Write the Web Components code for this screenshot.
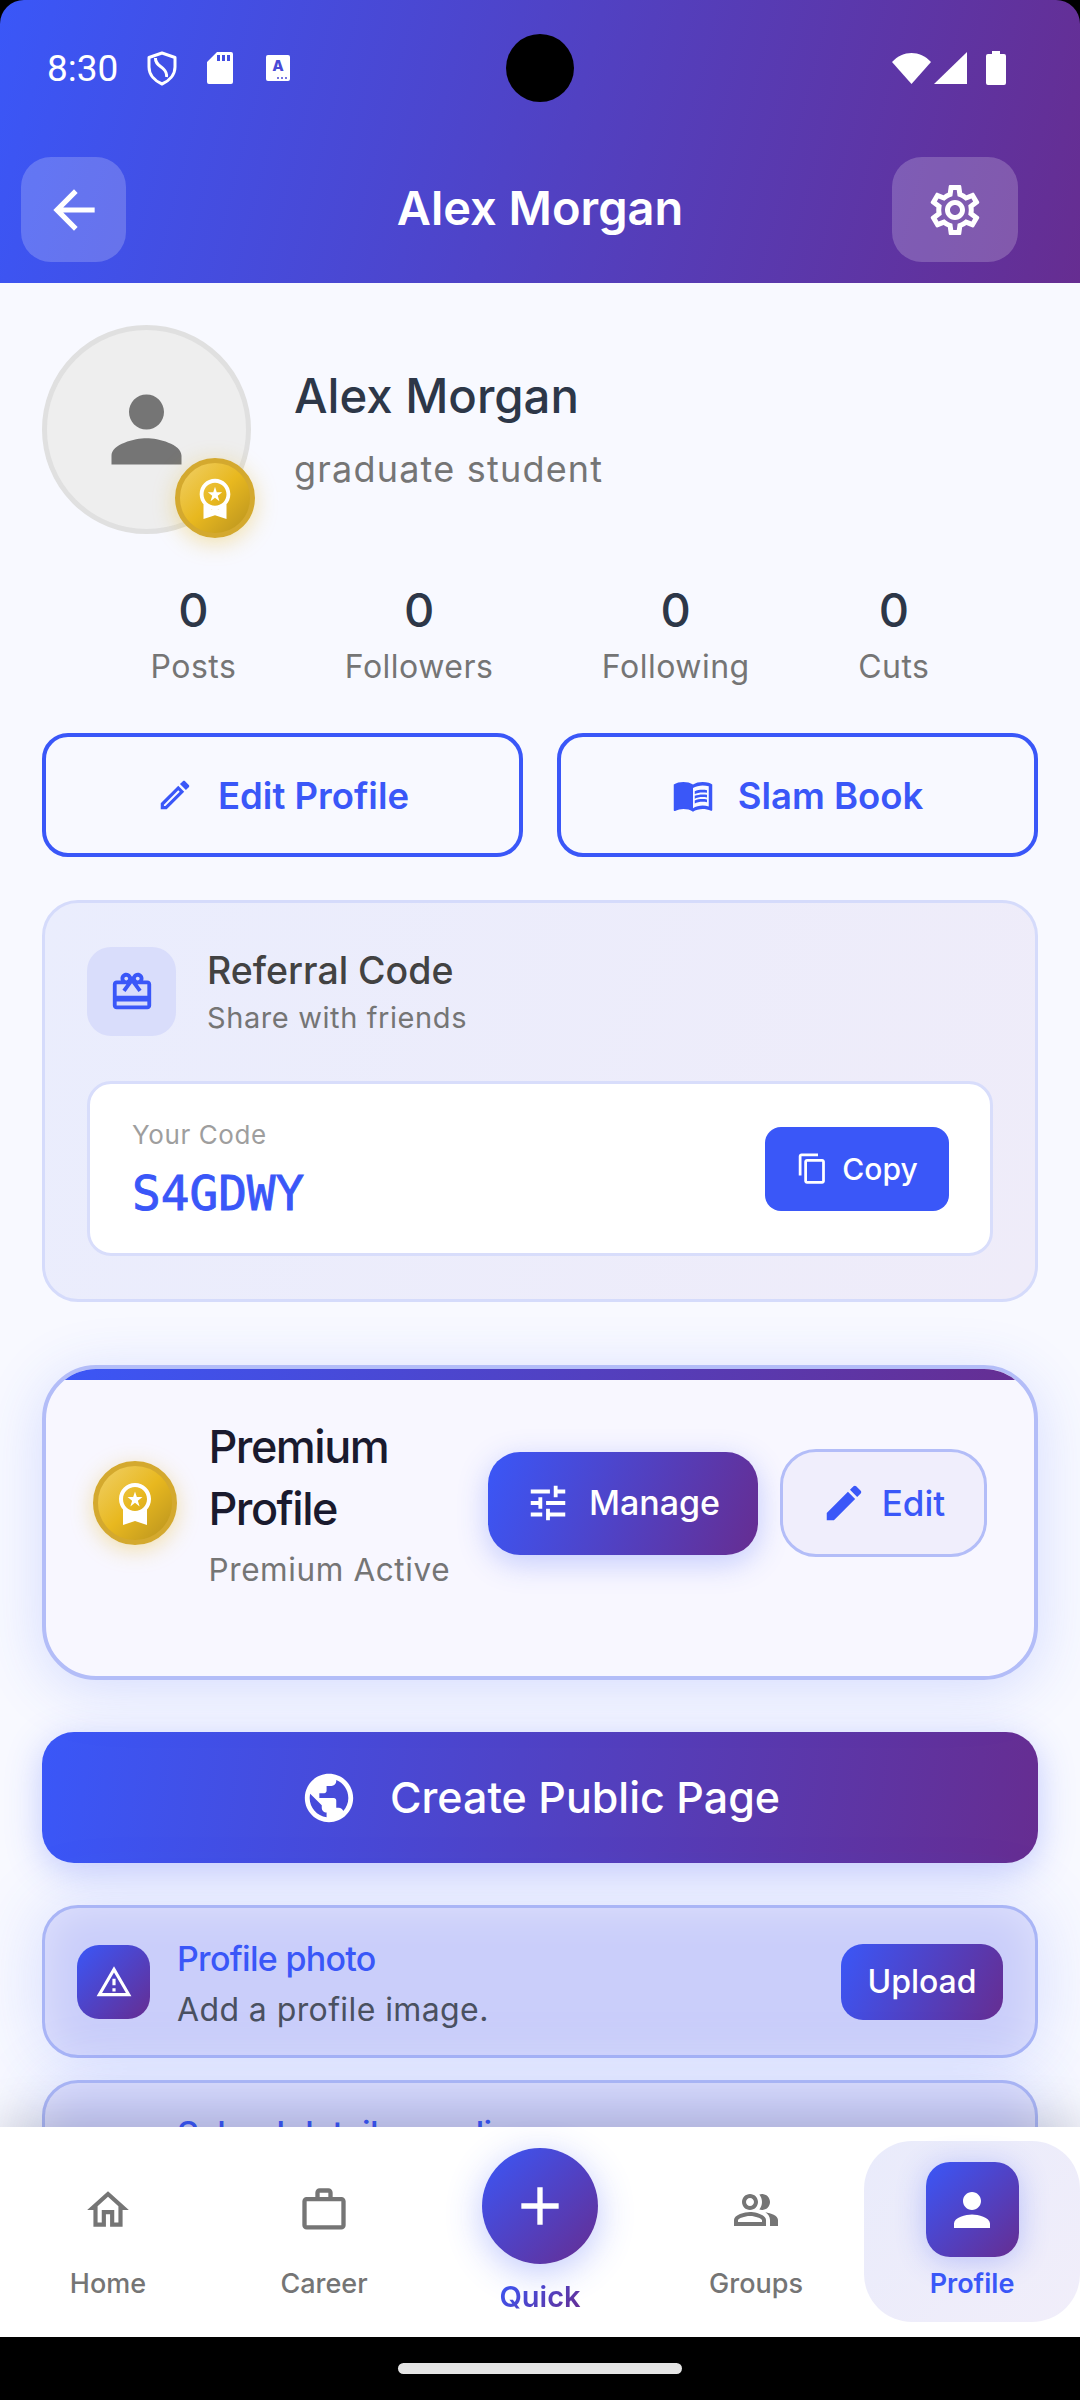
<!DOCTYPE html>
<html lang="en">
<head>
<meta charset="utf-8">
<title>Alex Morgan</title>
<style>
  html,body{margin:0;padding:0;background:#000;}
  body{width:1080px;height:2400px;font-family:Inter,"Noto Sans",sans-serif;overflow:hidden;}
</style>
</head>
<body>
<profile-app>
  <app-header slot="header" title-text="Alex Morgan"></app-header>

  <profile-summary name="Alex Morgan" role="graduate student"></profile-summary>

  <stat-row>
    <stat-item value="0">Posts</stat-item>
    <stat-item value="0">Followers</stat-item>
    <stat-item value="0">Following</stat-item>
    <stat-item value="0">Cuts</stat-item>
  </stat-row>

  <action-row>
    <outline-button icon="edit-o" size="38">Edit Profile</outline-button>
    <outline-button icon="book" size="42">Slam Book</outline-button>
  </action-row>

  <referral-card code="S4GDWY"></referral-card>
  <premium-card></premium-card>
  <cta-button>Create Public Page</cta-button>

  <alert-card style="margin-top:42px" heading="Profile photo" action="Upload">Add a profile image.</alert-card>
  <alert-card style="margin-top:22px" heading="School details pending" action="Add">Add your school details to connect with your classmates.</alert-card>

  <bottom-nav slot="nav">
    <nav-item icon="home" size="50">Home</nav-item>
    <nav-item icon="work" size="52">Career</nav-item>
    <nav-item icon="add" size="64" kind="quick">Quick</nav-item>
    <nav-item icon="group" size="48">Groups</nav-item>
    <nav-item icon="person" size="54" kind="active">Profile</nav-item>
  </bottom-nav>
</profile-app>

<script>
const BLUE = '#3a57f8', PURPLE = '#662d91';
const ICONS = {
  back:'M20 11H7.83l5.59-5.59L12 4l-8 8 8 8 1.41-1.41L7.83 13H20v-2z',
  settings:'M19.43 12.98c.04-.32.07-.64.07-.98 0-.34-.03-.66-.07-.98l2.11-1.65c.19-.15.24-.42.12-.64l-2-3.46c-.09-.16-.26-.25-.44-.25-.06 0-.12.01-.17.03l-2.49 1c-.52-.4-1.08-.73-1.69-.98l-.38-2.65C14.46 2.18 14.25 2 14 2h-4c-.25 0-.46.18-.49.42l-.38 2.65c-.61.25-1.17.59-1.69.98l-2.49-1c-.06-.02-.12-.03-.18-.03-.17 0-.34.09-.43.25l-2 3.46c-.13.22-.07.49.12.64l2.11 1.65c-.04.32-.07.65-.07.98 0 .33.03.66.07.98l-2.11 1.65c-.19.15-.24.42-.12.64l2 3.46c.09.16.26.25.44.25.06 0 .12-.01.17-.03l2.49-1c.52.4 1.08.73 1.69.98l.38 2.65c.03.24.24.42.49.42h4c.25 0 .46-.18.49-.42l.38-2.65c.61-.25 1.17-.59 1.69-.98l2.49 1c.06.02.12.03.18.03.17 0 .34-.09.43-.25l2-3.46c.12-.22.07-.49-.12-.64l-2.11-1.65zm-1.98-1.71c.04.31.05.52.05.73 0 .21-.02.43-.05.73l-.14 1.13.89.7 1.08.84-.7 1.21-1.27-.51-1.04-.42-.9.68c-.43.32-.84.56-1.25.73l-1.06.43-.16 1.13-.2 1.35h-1.4l-.19-1.35-.16-1.13-1.06-.43c-.43-.18-.83-.41-1.23-.71l-.91-.7-1.06.43-1.27.51-.7-1.21 1.08-.84.89-.7-.14-1.13c-.03-.31-.05-.54-.05-.74s.02-.43.05-.73l.14-1.13-.89-.7-1.08-.84.7-1.21 1.27.51 1.04.42.9-.68c.43-.32.84-.56 1.25-.73l1.06-.43.16-1.13.2-1.35h1.39l.19 1.35.16 1.13 1.06.43c.43.18.83.41 1.23.71l.91.7 1.06-.43 1.27-.51.7 1.21-1.07.85-.89.7.14 1.13zM12 8c-2.21 0-4 1.79-4 4s1.79 4 4 4 4-1.79 4-4-1.79-4-4-4zm0 6c-1.1 0-2-.9-2-2s.9-2 2-2 2 .9 2 2-.9 2-2 2z',
  person:'M12 12c2.21 0 4-1.79 4-4s-1.79-4-4-4-4 1.79-4 4 1.79 4 4 4zm0 2c-2.67 0-8 1.34-8 4v2h16v-2c0-2.66-5.33-4-8-4z',
  premium:'M9.68 13.69L12 11.93l2.31 1.76-.88-2.85L15.75 9h-2.84L12 6.19 11.09 9H8.25l2.31 1.84-.88 2.85zM20 10c0-4.42-3.58-8-8-8s-8 3.58-8 8 3.58 8 8 8 8-3.58 8-8zm-8 6c-3.31 0-6-2.69-6-6s2.69-6 6-6 6 2.69 6 6-2.69 6-6 6zM6 15.3V23l6-2 6 2v-7.7A8 8 0 0 1 12 18a8 8 0 0 1-6-2.7z',
  'edit-o':'M14.06 9.02l.92.92L5.92 19H5v-.92l9.06-9.06M17.66 3c-.25 0-.51.1-.7.29l-1.83 1.83 3.75 3.75 1.83-1.83c.39-.39.39-1.02 0-1.41l-2.34-2.34c-.2-.2-.45-.29-.71-.29zm-3.6 3.19L3 17.25V21h3.75L17.81 9.94l-3.75-3.75z',
  edit:'M3 17.25V21h3.75L17.81 9.94l-3.75-3.75L3 17.25zM20.71 7.04c.39-.39.39-1.02 0-1.41l-2.34-2.34c-.39-.39-1.02-.39-1.41 0l-1.83 1.83 3.75 3.75 1.83-1.83z',
  book:'M21 5c-1.11-.35-2.33-.5-3.5-.5-1.95 0-4.05.4-5.5 1.5-1.45-1.1-3.55-1.5-5.5-1.5S2.45 4.9 1 6v14.65c0 .25.25.5.5.5.1 0 .15-.05.25-.05C3.1 20.45 5.05 20 6.5 20c1.95 0 4.05.4 5.5 1.5 1.35-.85 3.8-1.5 5.5-1.5 1.65 0 3.35.3 4.75 1.05.1.05.15.05.25.05.25 0 .5-.25.5-.5V6c-.6-.45-1.25-.75-2-1zm0 13.5c-1.1-.35-2.3-.5-3.5-.5-1.7 0-4.15.65-5.5 1.5V8c1.35-.85 3.8-1.5 5.5-1.5 1.2 0 2.4.15 3.5.5v11.5zM17.5 10.5c.88 0 1.73.09 2.5.26V9.24c-.79-.15-1.64-.24-2.5-.24-1.7 0-3.24.29-4.5.83v1.66c1.13-.64 2.7-.99 4.5-.99zM13 12.49v1.66c1.13-.64 2.7-.99 4.5-.99.88 0 1.73.09 2.5.26V11.9c-.79-.15-1.64-.24-2.5-.24-1.7 0-3.24.3-4.5.83zM17.5 14.33c-1.7 0-3.24.29-4.5.83v1.66c1.13-.64 2.7-.99 4.5-.99.88 0 1.73.09 2.5.26v-1.52c-.79-.16-1.64-.24-2.5-.24z',
  gift:'M20 6h-2.18c.11-.31.18-.65.18-1 0-1.66-1.34-3-3-3-1.05 0-1.96.54-2.5 1.35l-.5.67-.5-.68C10.96 2.54 10.05 2 9 2 7.34 2 6 3.34 6 5c0 .35.07.69.18 1H4c-1.11 0-1.99.89-1.99 2L2 19c0 1.11.89 2 2 2h16c1.11 0 2-.89 2-2V8c0-1.11-.89-2-2-2zm-5-2c.55 0 1 .45 1 1s-.45 1-1 1-1-.45-1-1 .45-1 1-1zM9 4c.55 0 1 .45 1 1s-.45 1-1 1-1-.45-1-1 .45-1 1-1zm11 15H4v-2h16v2zm0-5H4V8h5.08L7 10.83 8.62 12 11 8.76l1-1.36 1 1.36L15.38 12 17 10.83 14.92 8H20v6z',
  copy:'M16 1H4c-1.1 0-2 .9-2 2v14h2V3h12V1zm3 4H8c-1.1 0-2 .9-2 2v14c0 1.1.9 2 2 2h11c1.1 0 2-.9 2-2V7c0-1.1-.9-2-2-2zm0 16H8V7h11v14z',
  tune:'M3 17v2h6v-2H3zM3 5v2h10V5H3zm10 16v-2h8v-2h-8v-2h-2v6h2zM7 9v2H3v2h4v2h2V9H7zm14 4v-2H11v2h10zm-6-4h2V7h4V5h-4V3h-2v6z',
  globe:'M12 2C6.48 2 2 6.48 2 12s4.48 10 10 10 10-4.48 10-10S17.52 2 12 2zm-1 17.93c-3.95-.49-7-3.85-7-7.93 0-.62.08-1.21.21-1.79L9 15v1c0 1.1.9 2 2 2v1.93zm6.9-2.54c-.26-.81-1-1.39-1.9-1.39h-1v-3c0-.55-.45-1-1-1H8v-2h2c.55 0 1-.45 1-1V7h2c1.1 0 2-.9 2-2v-.41c2.93 1.19 5 4.06 5 7.41 0 2.08-.8 3.97-2.1 5.39z',
  warning:'M12 5.99L19.53 19H4.47L12 5.99M12 2L1 21h22L12 2zm1 14h-2v2h2v-2zm0-6h-2v4h2v-4z',
  home:'M12 5.69l5 4.5V18h-2v-6H9v6H7v-7.81l5-4.5M12 3L2 12h3v8h6v-6h2v6h6v-8h3L12 3z',
  work:'M14 6V4h-4v2h4zM4 8v11h16V8H4zm16-2c1.11 0 2 .89 2 2v11c0 1.11-.89 2-2 2H4c-1.11 0-2-.89-2-2l.01-11c0-1.11.88-2 1.99-2h4V4c0-1.11.89-2 2-2h4c1.11 0 2 .89 2 2v2h4z',
  group:'M16.67 13.13C18.04 14.06 19 15.32 19 17v3h4v-3c0-2.18-3.57-3.47-6.33-3.87zM15 12c2.21 0 4-1.79 4-4s-1.79-4-4-4c-.47 0-.91.1-1.33.24C14.5 5.27 15 6.58 15 8s-.5 2.73-1.33 3.76c.42.14.86.24 1.33.24zM9 12c2.21 0 4-1.79 4-4s-1.79-4-4-4-4 1.79-4 4 1.79 4 4 4zm0-6c1.1 0 2 .9 2 2s-.9 2-2 2-2-.9-2-2 .9-2 2-2zM9 13c-2.67 0-8 1.34-8 4v3h16v-3c0-2.66-5.33-4-8-4zm6 5H3v-.99C3.2 16.29 6.3 15 9 15s5.8 1.29 6 2v1z',
  add:'M19 13h-6v6h-2v-6H5v-2h6V5h2v6h6v2z'
};

function define(name, css, html){
  customElements.define(name, class extends HTMLElement{
    connectedCallback(){
      if(this.shadowRoot) return;
      const root = this.attachShadow({mode:'open'});
      const a = n => this.getAttribute(n) || '';
      root.innerHTML = '<style>'+css+'</style>' + (typeof html==='function' ? html(a) : html);
    }
  });
}

define('m-icon', ':host{display:inline-flex;flex:none;color:inherit}svg{display:block;fill:currentColor}', a=>{
  const s = a('size')||24;
  return `<svg width="${s}" height="${s}" viewBox="0 0 24 24"><path d="${ICONS[a('name')]}"/></svg>`;
});

define('profile-app', `
  :host{display:flex;flex-direction:column;width:1080px;height:2400px;background:#000;color:#2d3748}
  .main{flex:1;min-height:0;overflow:hidden;background:#f8f9ff;padding:42px 42px 0;display:flex;flex-direction:column}
  .home{flex:none;height:63px;display:flex;justify-content:center;align-items:flex-start;padding-top:26px;box-sizing:border-box}
  .home i{display:block;width:284px;height:11px;border-radius:6px;background:#e6e6e6}
`, `<slot name="header"></slot><div class="main"><slot></slot></div><slot name="nav"></slot><div class="home"><i></i></div>`);

define('status-bar', `
  :host{display:flex;align-items:center;height:66px;padding:0 0 0 47px;color:#fff;position:relative}
  .time{font:400 37px/1 Roboto,sans-serif;width:70px;margin-right:30px}
  .hole{position:absolute;left:506px;top:-1px;width:68px;height:68px;border-radius:50%;background:#000}
  svg{display:block;fill:#fff}
  .sp{flex:1}
  .a{width:24px;height:26px;background:#fff;border-radius:2px;margin-left:33px;color:#4a4ad6;font:800 15px/22px Inter,sans-serif;text-align:center;overflow:hidden;position:relative}
  .dots{position:absolute;right:3px;bottom:2px;display:flex;gap:1.5px}
  .dots b{display:block;width:2.5px;height:2.5px;border-radius:50%;background:#4a4ad6}
`, `<span class="time">8:30</span>
  <svg width="30" height="35" viewBox="0 0 30 35"><path d="M15 2 L28 6.5 V16 C28 24 22 30 15 33 C8 30 2 24 2 16 V6.5 Z M8.5 7 C8 13 13 14.5 16.5 18 C19 20.5 20 23 19.5 26" fill="none" stroke="#fff" stroke-width="3" stroke-linejoin="round"/></svg>
  <svg style="margin-left:30px" width="26" height="32" viewBox="0 0 26 32"><path fill-rule="evenodd" d="M10 0H24a2 2 0 0 1 2 2V30a2 2 0 0 1-2 2H2a2 2 0 0 1-2-2V10zM10 3v6h3V3zM15 3v6h3V3zM20 3v6h3V3z"/></svg>
  <span class="a">A<span class="dots"><b></b><b></b><b></b></span></span>
  <span class="hole"></span>
  <span class="sp"></span>
  <svg width="39" height="31" viewBox="0 0 39 31"><path d="M0 9 C11 -3 28 -3 39 9 L19.5 31 Z"/></svg>
  <svg style="margin-left:3px" width="33" height="32" viewBox="0 0 33 32"><path d="M33 0V32H0Z"/></svg>
  <svg style="margin:0 74px 0 19px" width="20" height="34" viewBox="0 0 20 34"><path d="M6 0H14V3H18a2 2 0 0 1 2 2V32a2 2 0 0 1-2 2H2a2 2 0 0 1-2-2V5a2 2 0 0 1 2-2H6Z"/></svg>`);

define('app-header', `
  :host{display:block;height:283px;flex:none;box-sizing:border-box;padding-top:35px;border-radius:24px 24px 0 0;
    background:linear-gradient(104.7deg,${BLUE},${PURPLE});color:#fff}
  .bar{display:flex;align-items:center;justify-content:space-between;margin-top:56px;padding:0 62px 0 21px}
  .btn{height:105px;border-radius:30px;background:rgba(255,255,255,.2);display:flex;align-items:center;justify-content:center}
  .b1{width:105px}.b2{width:126px}
  h1{margin:0 0 3px;font:600 47px/60px Inter,sans-serif;flex:1;text-align:center;padding-left:62px}
`, a=>`<status-bar></status-bar><div class="bar">
  <div class="btn b1"><m-icon name="back" size="62"></m-icon></div>
  <h1>${a('title-text')}</h1>
  <div class="btn b2"><m-icon name="settings" size="60"></m-icon></div></div>`);

define('medal-badge', `
  :host{display:flex;align-items:center;justify-content:center;box-sizing:border-box;border-radius:50%;color:#fff;
    border:5px solid #d4a92e;background:linear-gradient(135deg,#f0d068 0%,#e8b81f 50%,#b8921f 100%);
    box-shadow:0 5px 22px rgba(232,184,31,.38)}
`, a=>`<m-icon name="premium" size="${a('icon')||46}"></m-icon>`);

define('profile-summary', `
  :host{display:flex;align-items:center;gap:43px;height:209px;flex:none}
  .av{position:relative;width:209px;height:209px;box-sizing:border-box;border-radius:50%;border:5px solid #e0e0e0;background:#eee;color:#757575;display:flex;align-items:center;justify-content:center;flex:none}
  medal-badge{position:absolute;left:128px;top:128px;width:80px;height:80px}
  .n{font:500 47.3px/60px Inter,sans-serif;color:#2d3748}
  .r{font:400 36px/48px Inter,sans-serif;color:#757575;margin-top:19px;letter-spacing:1.2px}
`, a=>`<div class="av"><m-icon name="person" size="105"></m-icon><medal-badge></medal-badge></div>
  <div><div class="n">${a('name')}</div><div class="r">${a('role')}</div></div>`);

define('stat-row', `:host{display:flex;justify-content:space-evenly;margin-top:49px;flex:none}`, `<slot></slot>`);
define('stat-item', `
  :host{display:flex;flex-direction:column;align-items:center}
  .v{font:500 47px/54px Inter,sans-serif;color:#2d3748}
  .l{font:400 32px/40px Inter,sans-serif;color:#757575;margin-top:10px;letter-spacing:.5px}
`, a=>`<div class="v">${a('value')}</div><div class="l"><slot></slot></div>`);

define('action-row', `:host{display:flex;gap:34px;margin-top:46px;flex:none}`, `<slot></slot>`);
define('outline-button', `
  :host{flex:1;height:124px;box-sizing:border-box;border:4px solid #3a57f8;border-radius:26px;display:flex;align-items:center;justify-content:center;gap:24px;color:#3a57f8;font:600 36.5px/1 Inter,sans-serif}
  span{padding-top:2px}
`, a=>`<m-icon name="${a('icon')}" size="${a('size')}"></m-icon><span><slot></slot></span>`);

define('referral-card', `
  :host{display:block;flex:none;margin-top:43px;height:402px;box-sizing:border-box;padding:44px 42px 0;border:3px solid #d5dbfb;border-radius:36px;
    background:linear-gradient(112deg,#eaedfd,#efecf9)}
  .head{display:flex;align-items:center;gap:31px;height:89px}
  .ico{width:89px;height:89px;border-radius:24px;background:#d9ddfb;color:#3a57f8;display:flex;align-items:center;justify-content:center}
  .t{font:500 37.5px/44px Inter,sans-serif;color:#424242;padding-top:2px}
  .s{font:400 29px/36px Inter,sans-serif;color:#757575;margin-top:7px;letter-spacing:.6px}
  .box{margin-top:45px;height:175px;box-sizing:border-box;background:#fff;border:3px solid #d8ddfb;border-radius:24px;padding:0 41px 0 42px;display:flex;align-items:center;justify-content:space-between}
  .y{font:400 26px/32px Inter,sans-serif;color:#9e9e9e;letter-spacing:.6px;margin-top:3px}
  .c{font:400 47.7px/56px "DejaVu Sans Mono",monospace;-webkit-text-stroke:.9px #3a57f8;color:#3a57f8;margin-top:15px}
  .copy{width:184px;height:84px;border-radius:16px;background:#3a57f8;color:#fff;display:flex;align-items:center;justify-content:center;gap:13px;font:500 30px/1 Inter,sans-serif}
`, a=>`<div class="head"><div class="ico"><m-icon name="gift" size="46"></m-icon></div>
  <div><div class="t">Referral Code</div><div class="s">Share with friends</div></div></div>
  <div class="box"><div><div class="y">Your Code</div><div class="c">${a('code')}</div></div>
  <div class="copy"><m-icon name="copy" size="33"></m-icon><span>Copy</span></div></div>`);

define('premium-card', `
  :host{display:block;flex:none;margin-top:63px;height:315px;box-sizing:border-box;position:relative;
    border:4px solid #b3bdf8;border-radius:54px;background:#f8f7ff;box-shadow:0 10px 60px rgba(58,87,248,.18)}
  .clip{position:absolute;left:0;right:0;top:0;bottom:0;border-radius:50px;overflow:hidden}
  .top{height:11px;background:linear-gradient(90.6deg,${BLUE},${PURPLE})}
  .row{display:flex;align-items:center;padding:47px 47.5px 0 47px;height:174px;position:relative}
  medal-badge{width:84px;height:84px;flex:none}
  .tx{flex:1;margin-left:31.5px;min-width:0}
  .t{font:500 45px/62px Inter,sans-serif;color:#1a1a2e;letter-spacing:-1.5px}
  .s{font:400 31.5px/40px Inter,sans-serif;color:#757575;margin-top:10px;letter-spacing:.6px;white-space:nowrap}
  .m{width:270px;height:103px;border-radius:32px;margin-left:20px;background:linear-gradient(110.9deg,${BLUE},${PURPLE});color:#fff;display:flex;align-items:center;justify-content:center;gap:18px;font:500 34px/1 Inter,sans-serif;box-shadow:0 8px 30px rgba(58,87,248,.28);flex:none}
  .e{width:207px;height:108px;box-sizing:border-box;margin-left:22px;border:3.5px solid #b3bdf8;border-radius:36px;background:#f0eefc;color:#3a57f8;display:flex;align-items:center;justify-content:center;gap:15px;font:500 35px/1 Inter,sans-serif;flex:none}
`, `<div class="clip"><div class="top"></div></div><div class="row"><medal-badge icon="48"></medal-badge>
  <div class="tx"><div class="t">Premium Profile</div><div class="s">Premium Active</div></div>
  <div class="m"><m-icon name="tune" size="46"></m-icon><span>Manage</span></div>
  <div class="e"><m-icon name="edit" size="46"></m-icon><span>Edit</span></div></div>`);

define('cta-button', `
  :host{display:flex;flex:none;margin-top:52px;height:131px;border-radius:32px;background:linear-gradient(97.5deg,${BLUE},${PURPLE});color:#fff;align-items:center;justify-content:center;gap:32px;font:500 43px/1 Inter,sans-serif;box-shadow:0 8px 36px rgba(58,87,248,.28)}
`, `<m-icon name="globe" size="58"></m-icon><span><slot></slot></span>`);

define('alert-card', `
  :host{display:flex;flex:none;align-items:center;box-sizing:border-box;padding:23px 32px;border:3px solid #a9b5f6;border-radius:36px;background:#cacefa;
    box-shadow:0 0 70px rgba(58,87,248,.18), inset 0 0 44px rgba(255,255,255,.42)}
  .ic{width:73px;height:74px;border-radius:22px;background:linear-gradient(135deg,${BLUE},${PURPLE});color:#fff;display:flex;align-items:center;justify-content:center;flex:none}
  .tx{flex:1;margin-left:27px;padding-top:6px;padding-right:20px}
  .t{font:500 34px/44px Inter,sans-serif;color:#3a57f8;letter-spacing:-.7px}
  .s{font:400 32px/44px Inter,sans-serif;color:#4a5160;margin-top:7px;letter-spacing:.4px}
  .b{width:162px;height:76px;border-radius:22px;background:linear-gradient(115deg,${BLUE},${PURPLE});color:#fff;display:flex;align-items:center;justify-content:center;font:500 32px/1 Inter,sans-serif;flex:none}
`, a=>`<div class="ic"><m-icon name="warning" size="38"></m-icon></div>
  <div class="tx"><div class="t">${a('heading')}</div><div class="s"><slot></slot></div></div>
  <div class="b">${a('action')}</div>`);

define('bottom-nav', `
  :host{display:grid;grid-template-columns:repeat(5,216px);flex:none;height:210px;background:#fff;padding-top:14px;box-sizing:border-box;position:relative;z-index:1;box-shadow:0 -8px 44px rgba(0,0,0,.16)}
`, `<slot></slot>`);

customElements.define('nav-item', class extends HTMLElement{
  connectedCallback(){
    if(this.shadowRoot) return;
    const icon=this.getAttribute('icon'), size=this.getAttribute('size');
    const r = this.attachShadow({mode:'open'});
    r.innerHTML = `<style>
      :host{display:flex;flex-direction:column;align-items:center;height:181px;border-radius:48px;color:#757575;font:500 27px/32px Inter,sans-serif}
      :host([kind=active]){background:linear-gradient(135deg,#e9ebfb,#f1eefa);color:#3a57f8;font-weight:600}
      .i{width:93px;height:95px;margin-top:21px;display:flex;align-items:center;justify-content:center}
      :host([kind=active]) .i{border-radius:24px;background:linear-gradient(135deg,${BLUE},${PURPLE});color:#fff;box-shadow:0 4px 30px rgba(58,87,248,.3)}
      :host([kind=quick]) .i{width:116px;height:116px;margin-top:7px;border-radius:50%;background:linear-gradient(135deg,${BLUE},${PURPLE});color:#fff;box-shadow:0 8px 36px rgba(58,87,248,.32)}
      .l{margin-top:11px}
      :host([kind=quick]) .l{margin-top:17px;font-size:29px;font-weight:600;background:linear-gradient(135deg,${BLUE},${PURPLE});-webkit-background-clip:text;background-clip:text;color:transparent}
    </style><div class="i"><m-icon name="${icon}" size="${size}"></m-icon></div><div class="l"><slot></slot></div>`;
  }
});
</script>
</body>
</html>
